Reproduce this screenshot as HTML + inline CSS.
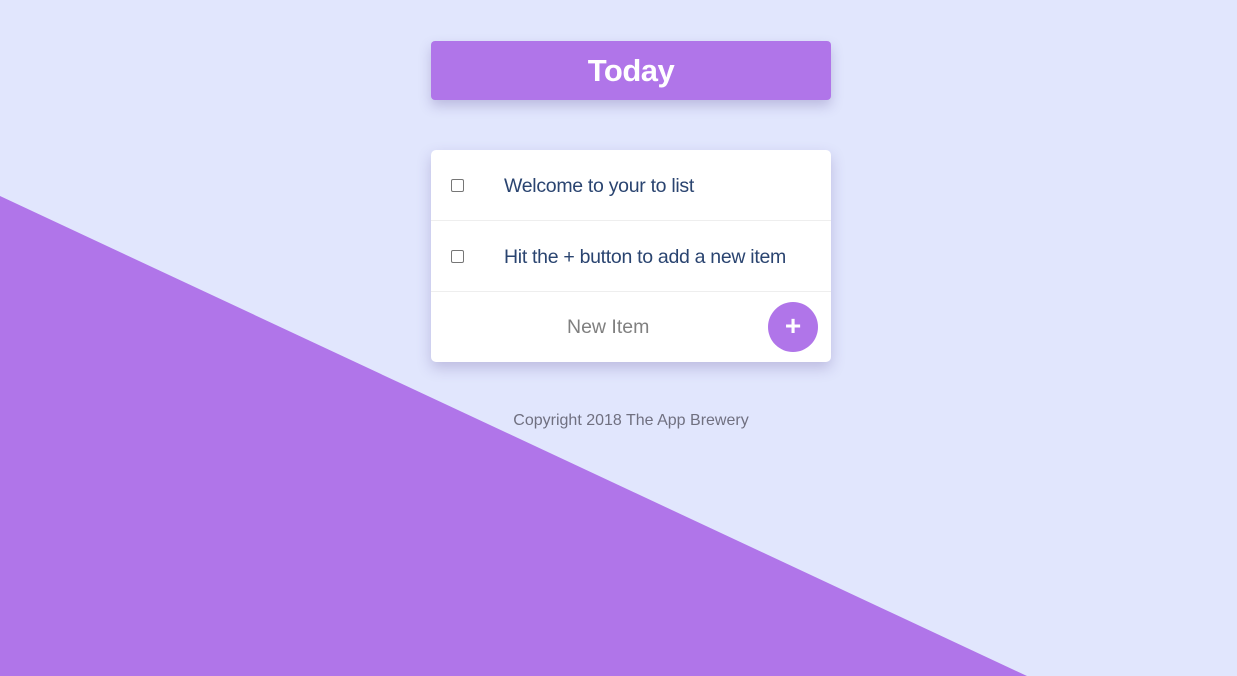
<!DOCTYPE html>
<html><head><style>
html,body{margin:0;padding:0;width:1237px;height:676px;overflow:hidden;background:#E1E6FD;font-family:"Liberation Sans",sans-serif;}
.bg{position:absolute;left:0;top:0;width:1237px;height:676px}
.head{position:absolute;left:431px;top:41px;width:400px;height:59px;background:#B075E9;border-radius:4px;box-shadow:0 6px 12px rgba(80,60,140,0.25);color:#fff;font-weight:bold;font-size:31px;text-align:center;line-height:59px;letter-spacing:-0.5px}
.card{position:absolute;left:431px;top:150px;width:400px;height:212px;background:#fff;border-radius:5px;box-shadow:0 6px 14px rgba(80,60,140,0.25)}
.row{position:absolute;left:0;width:400px;height:70px;border-bottom:1px solid #eee}
.cb{position:absolute;left:20px;top:29px;width:11px;height:11px;border:1px solid #767676;border-radius:2px;background:#fff}
.t{position:absolute;left:73px;top:1px;line-height:70px;font-size:19.5px;color:#2a4470;letter-spacing:-0.3px}
.new{position:absolute;left:136px;top:142px;line-height:70px;font-size:19.5px;color:#808080}
.btn{position:absolute;left:337px;top:152px;width:50px;height:50px;border-radius:50%;background:#B075E9;color:#fff;font-size:28px;font-weight:bold;text-align:center;line-height:48px}
.foot{position:absolute;left:0;width:1262px;top:412px;text-align:center;font-size:16px;color:#707080}
</style></head><body>
<svg class="bg" width="1237" height="676"><polygon points="0,196 1027,676 0,676" fill="#B075E9"/></svg>
<div class="head">Today</div>
<div class="card">
<div class="row" style="top:0"><div class="cb"></div><div class="t">Welcome to your to list</div></div>
<div class="row" style="top:71px"><div class="cb"></div><div class="t">Hit the + button to add a new item</div></div>
<div class="new">New Item</div>
<div class="btn">+</div>
</div>
<div class="foot">Copyright 2018 The App Brewery</div>
</body></html>
